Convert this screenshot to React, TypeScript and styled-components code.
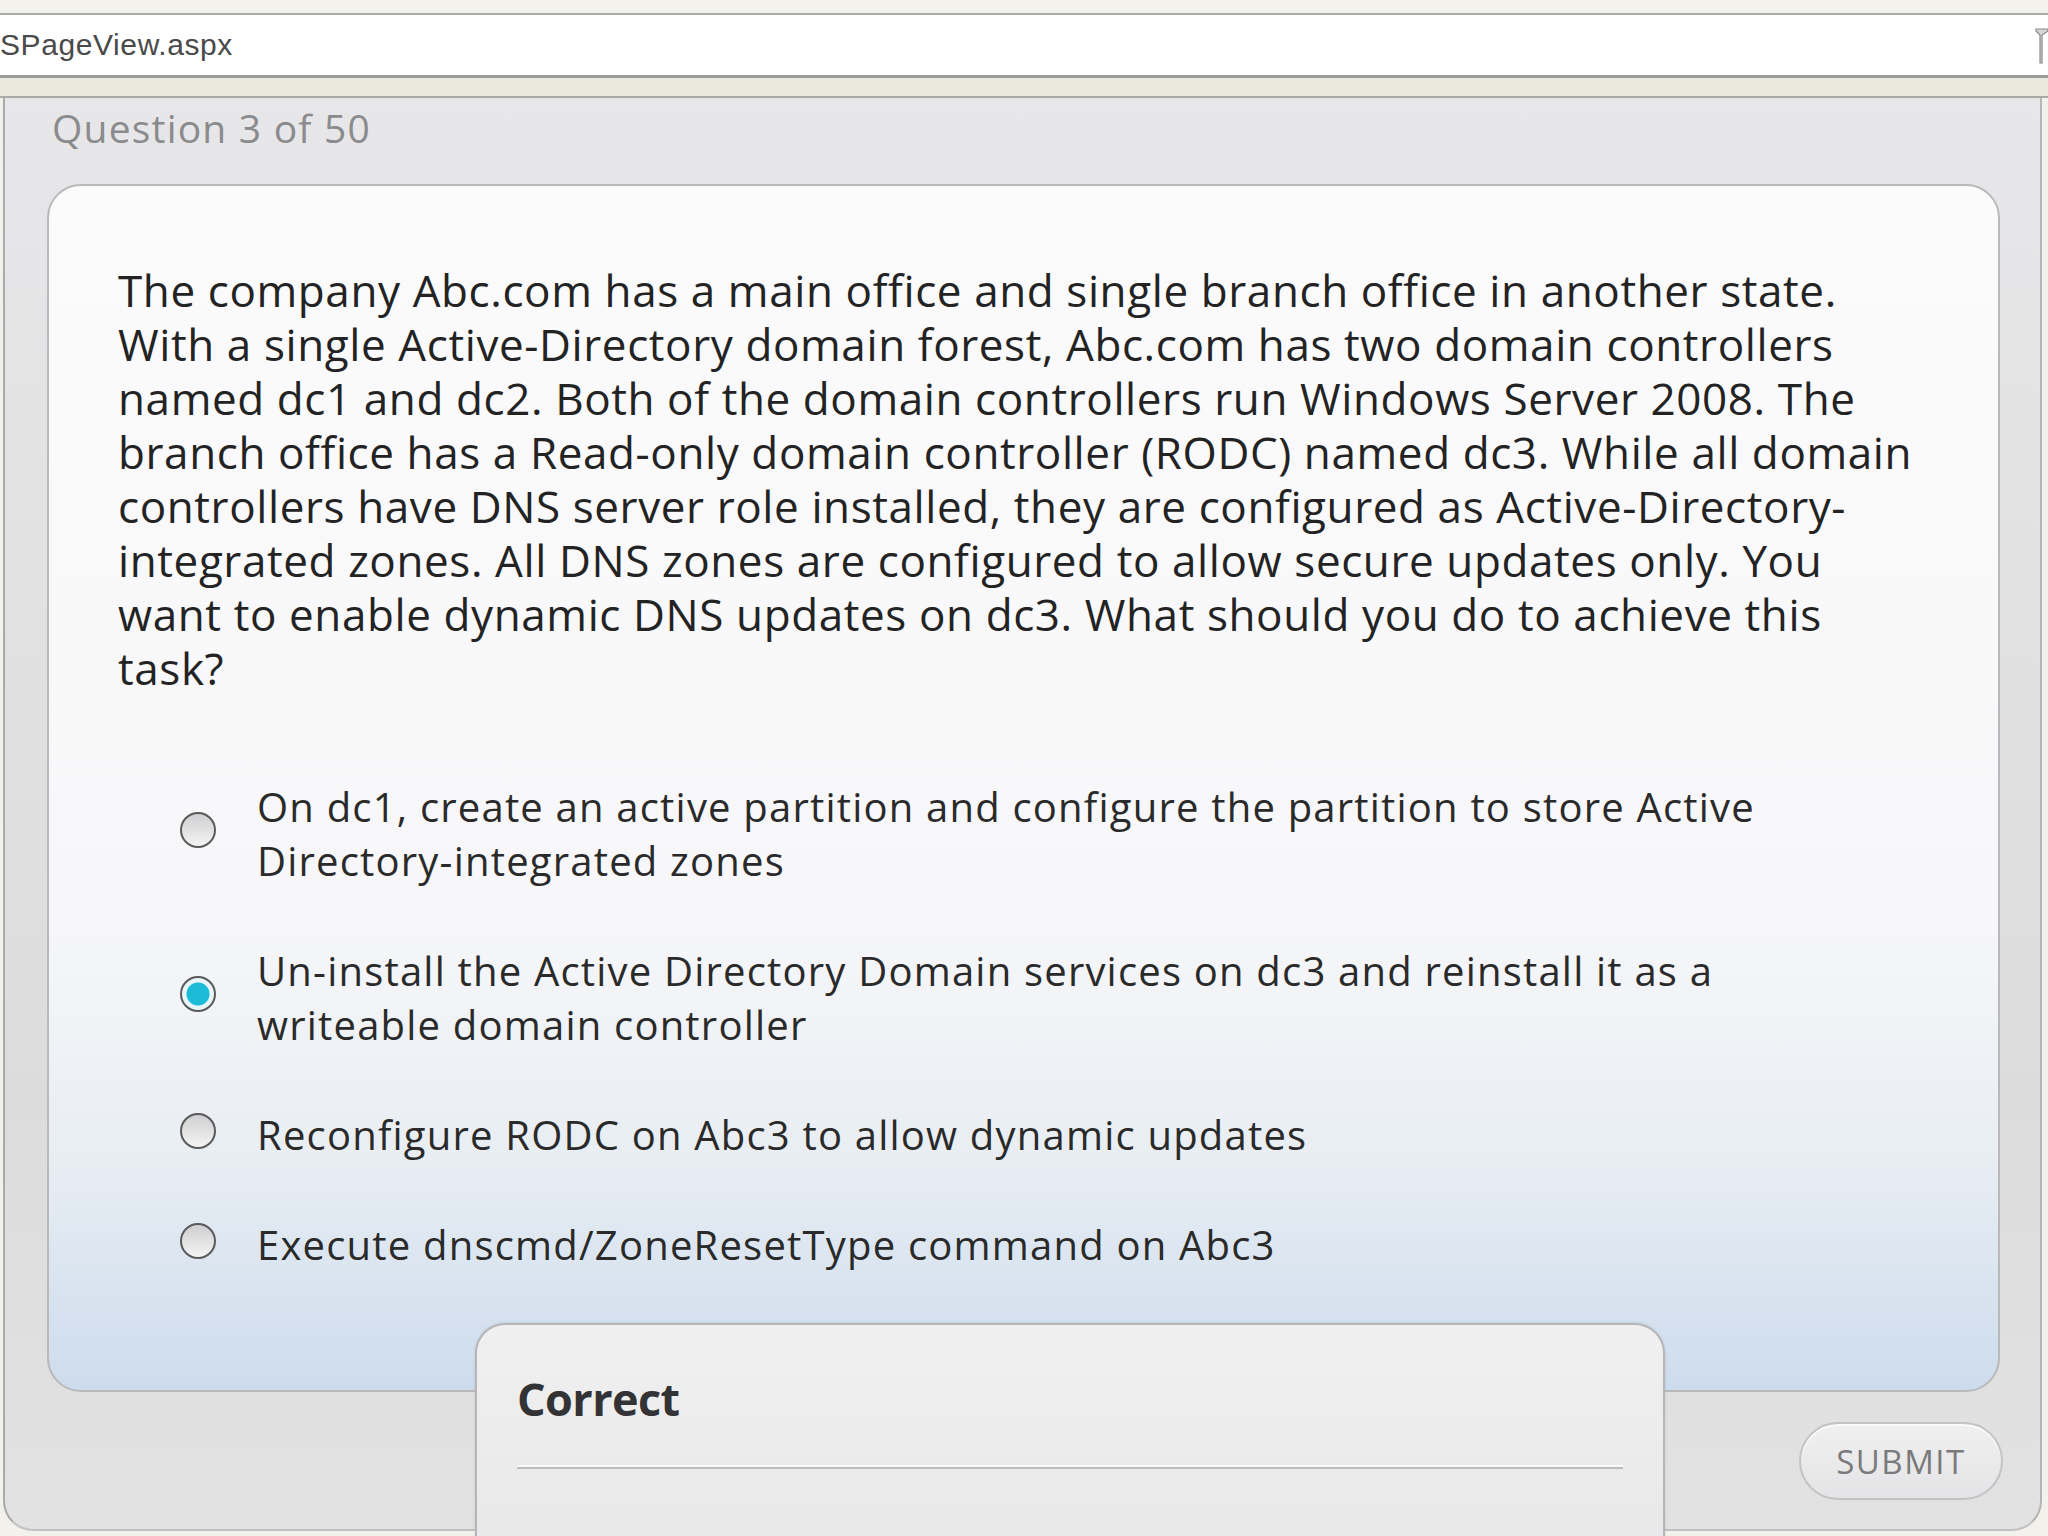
import React from 'react'
import styled, { createGlobalStyle } from 'styled-components'

const GlobalStyle = createGlobalStyle`
html, body {
  margin: 0;
  padding: 0;
  background: #f3f1ec;
  overflow: hidden;
}
* { box-sizing: border-box; }
`

const Page = styled.div`
position: relative;
width: 2048px;
height: 1536px;
overflow: hidden;
background: #f3f1ec;
font-family: "Open Sans", "Noto Sans", sans-serif;
display: flex;
flex-direction: column;
`

const TopStrip = styled.div`
height: 13px;
background: #f4f2ec;
flex-shrink: 0;
`

const AddressBar = styled.div`
height: 65px;
flex-shrink: 0;
background: #ffffff;
border-top: 2px solid #a9a9a6;
border-bottom: 3px solid #9c9c9a;
display: flex;
align-items: center;
justify-content: space-between;
`

const AddressText = styled.span`
font-family: "Liberation Sans", sans-serif;
font-size: 30px;
color: #4a4a4a;
margin-left: -9px;
letter-spacing: 0.6px;
`

const BeigeStrip = styled.div`
height: 20px;
flex-shrink: 0;
background: #ebe9dd;
border-bottom: 2px solid #a9a9a6;
`

const Panel = styled.div`
flex: 1;
margin: 0 6px 5px 3px;
background: linear-gradient(#e7e7e9, #dcdcdd 70%, #e2e2e3);
border-left: 2px solid #aaaaaa;
border-right: 2px solid #b5b5b5;
border-bottom: 2px solid #c2c2c2;
border-radius: 0 0 30px 30px;
padding: 8px 0 0 42px;
display: flex;
flex-direction: column;
`

const Heading = styled.div`
font-size: 39px;
line-height: 44px;
letter-spacing: 1.2px;
color: #8b8b8d;
padding-left: 5px;
`

const Card = styled.div`
margin-top: 34px;
width: 1953px;
height: 1208px;
border: 2px solid #b9b9bc;
border-radius: 34px;
background: linear-gradient(#fbfbfc 0%, #f7f7f9 60%, #e9eef3 80%, #cddced 100%);
padding: 77px 0 0 69px;
display: flex;
flex-direction: column;
`

const Stem = styled.div`
font-size: 44px;
line-height: 54px;
letter-spacing: 0.6px;
color: #232323;
`

const Line = styled.span`
display: block;
white-space: nowrap;
`

const Options = styled.div`
margin-top: 85px;
display: flex;
flex-direction: column;
gap: 56px;
`

const Option = styled.label`
display: flex;
align-items: center;
`

const Radio = styled.span<{ checked?: boolean }>`
width: 36px;
height: 36px;
flex-shrink: 0;
margin-left: 62px;
margin-right: 41px;
margin-top: -8px;
border-radius: 50%;
border: 2px solid #5a5a5a;
background: ${(p) =>
  p.checked
    ? 'radial-gradient(circle, #1cbcd9 0 11px, #e8f6fa 12px 100%)'
    : 'linear-gradient(#cfcfd1, #f4f4f5)'};
`

const OptionText = styled.div`
font-size: 40px;
line-height: 54px;
letter-spacing: 1.2px;
color: #2a2a2a;
`

const Footer = styled.div`
display: flex;
justify-content: flex-end;
padding-right: 37px;
margin-top: 30px;
`

const SubmitButton = styled.button`
width: 204px;
height: 78px;
border-radius: 39px;
border: 2px solid #c3c3c5;
background: linear-gradient(#f0f0f1, #e4e4e6);
box-shadow: inset 0 2px 0 #fafafa;
font-family: "Open Sans", sans-serif;
font-size: 33px;
color: #7a7a7c;
letter-spacing: 1.5px;
padding: 0;
`

const Feedback = styled.div`
position: absolute;
left: 475px;
top: 1323px;
width: 1190px;
height: 260px;
border: 2px solid #b6b6b8;
border-bottom: none;
border-radius: 30px 30px 0 0;
background: linear-gradient(#f0f0f1, #e7e7e9);
box-shadow: 0 0 3px rgba(0, 0, 0, 0.12);
padding: 48px 40px 0 40px;
`

const FeedbackTitle = styled.div`
font-size: 45px;
line-height: 52px;
font-weight: 700;
color: #333335;
letter-spacing: -0.6px;
`

const Divider = styled.div`
margin-top: 42px;
height: 2px;
background: #bcbcbe;
box-shadow: 0 -2px 0 #f8f8f8;
`

const stem = [
  'The company Abc.com has a main office and single branch office in another state.',
  'With a single Active-Directory domain forest, Abc.com has two domain controllers',
  'named dc1 and dc2. Both of the domain controllers run Windows Server 2008. The',
  'branch office has a Read-only domain controller (RODC) named dc3. While all domain',
  'controllers have DNS server role installed, they are configured as Active-Directory-',
  'integrated zones. All DNS zones are configured to allow secure updates only. You',
  'want to enable dynamic DNS updates on dc3. What should you do to achieve this',
  'task?',
]

const options = [
  {
    lines: [
      'On dc1, create an active partition and configure the partition to store Active',
      'Directory-integrated zones',
    ],
    checked: false,
  },
  {
    lines: [
      'Un-install the Active Directory Domain services on dc3 and reinstall it as a',
      'writeable domain controller',
    ],
    checked: true,
  },
  { lines: ['Reconfigure RODC on Abc3 to allow dynamic updates'], checked: false },
  { lines: ['Execute dnscmd/ZoneResetType command on Abc3'], checked: false },
]

export default function App() {
  return (
    <Page>
      <GlobalStyle />
      <TopStrip />
      <AddressBar>
        <AddressText>/SPageView.aspx</AddressText>
        <svg width="16" height="40" viewBox="0 0 16 40">
          <path d="M4 4 L16 4 L16 6 L10 10 L10 38 L8 38 L8 10 L4 6 Z" fill="#d6d6d6" stroke="#8a8a8a" strokeWidth="1.2" />
        </svg>
      </AddressBar>
      <BeigeStrip />
      <Panel>
        <Heading>Question 3 of 50</Heading>
        <Card>
          <Stem>
            {stem.map((l) => (
              <Line key={l}>{l}</Line>
            ))}
          </Stem>
          <Options>
            {options.map((o) => (
              <Option key={o.lines[0]}>
                <Radio checked={o.checked} />
                <OptionText>
                  {o.lines.map((l) => (
                    <Line key={l}>{l}</Line>
                  ))}
                </OptionText>
              </Option>
            ))}
          </Options>
        </Card>
        <Footer>
          <SubmitButton>SUBMIT</SubmitButton>
        </Footer>
      </Panel>
      <Feedback>
        <FeedbackTitle>Correct</FeedbackTitle>
        <Divider />
      </Feedback>
    </Page>
  )
}
